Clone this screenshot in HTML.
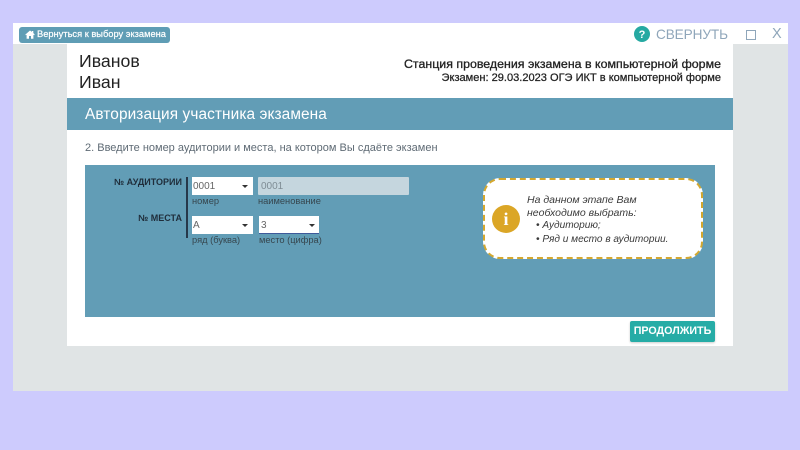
<!DOCTYPE html>
<html lang="ru">
<head>
<meta charset="utf-8">
<style>
html,body{margin:0;padding:0}
body{width:800px;height:450px;background:#cdcbfd;position:relative;overflow:hidden;font-family:"Liberation Sans",sans-serif;filter:blur(.35px)}
div,span,svg{position:absolute;white-space:nowrap}
.t{line-height:1}
.sel{background:#fff;height:18px;top:177px}
.sel span{left:1px;top:4px;font-size:10px;line-height:12px;color:#666}
.sel i{position:absolute;top:8px;width:0;height:0;border-left:3px solid transparent;border-right:3px solid transparent;border-top:3px solid #333}
.lab{font-size:9.3px;color:#37474f;line-height:10px}
.inf{left:527px;font-size:10.5px;font-style:italic;color:#3a3a3a;line-height:12px}
</style>
</head>
<body>
<div style="left:12.5px;top:22.5px;width:775.5px;height:368.5px;background:#e0e4e5"></div>
<div style="left:12.5px;top:22.5px;width:775.5px;height:21.5px;background:#fff"></div>
<div style="left:67px;top:44px;width:666px;height:302px;background:#fff"></div>

<div style="left:19px;top:26.5px;width:151px;height:16px;background:#5f9db5;border-radius:3px"></div>
<svg style="left:25px;top:30px" width="10" height="9" viewBox="0 0 10 9"><path d="M5 0.5L0.3 4.6l.6.6L1.6 4.7V8.7H4V6h2v2.7h2.4V4.7l.7.5.6-.6L8.3 3V1H7v.9z" fill="#fff"/></svg>
<div class="t" style="left:37px;top:29px;font-size:9.3px;line-height:11px;color:#fff;font-weight:400;-webkit-text-stroke:.2px #fff">Вернуться к выбору экзамена</div>

<div style="left:634px;top:26px;width:16px;height:16px;border-radius:50%;background:#26a9a2"></div>
<div class="t" style="left:634px;top:28.5px;width:16px;text-align:center;font-size:11px;line-height:12px;font-weight:700;color:#fff">?</div>
<div class="t" style="left:656px;top:26px;font-size:13.6px;line-height:17px;color:#8fa6ba;letter-spacing:-.1px">СВЕРНУТЬ</div>
<div style="left:746px;top:30px;width:8px;height:8px;border:1px solid #8fa6ba"></div>
<div class="t" style="left:772px;top:26px;font-size:14.5px;line-height:17px;color:#8fa6ba">X</div>

<div class="t" style="left:79px;top:52px;font-size:17.7px;line-height:19px;color:#222">Иванов</div>
<div class="t" style="left:79px;top:72.5px;font-size:17.7px;line-height:19px;color:#222">Иван</div>
<div class="t" style="right:79px;top:57px;font-size:12.4px;line-height:15px;color:#222;-webkit-text-stroke:.3px #222">Станция проведения экзамена в компьютерной форме</div>
<div class="t" style="right:79px;top:72px;font-size:11.05px;line-height:13px;color:#222;-webkit-text-stroke:.25px #222">Экзамен: 29.03.2023 ОГЭ ИКТ в компьютерной форме</div>

<div style="left:67px;top:98px;width:666px;height:32px;background:#629db6"></div>
<div class="t" style="left:85px;top:106px;font-size:15.4px;line-height:18px;color:#fff;letter-spacing:.1px">Авторизация участника экзамена</div>
<div class="t" style="left:85px;top:140.5px;font-size:11px;line-height:14px;color:#5f6b75">2. Введите номер аудитории и места, на котором Вы сдаёте экзамен</div>

<div style="left:85px;top:165px;width:630px;height:152px;background:#629db6"></div>

<div class="t" style="right:618px;top:176px;font-size:9px;line-height:12px;font-weight:700;color:#1f2d3a">№ АУДИТОРИИ</div>
<div class="t" style="right:618px;top:212px;font-size:9px;line-height:12px;font-weight:700;color:#1f2d3a">№ МЕСТА</div>
<div style="left:186px;top:177px;width:2px;height:61px;background:#26384a"></div>

<div class="sel" style="left:192px;width:61px"><span>0001</span><i style="left:50px"></i></div>
<div style="left:258px;top:177px;width:151px;height:18px;background:#c5d6de;border-radius:1px"></div>
<div class="t" style="left:261px;top:181px;font-size:10px;line-height:12px;color:#7f8d95">0001</div>
<div class="lab" style="left:192px;top:196px">номер</div>
<div class="lab" style="left:258px;top:196px">наименование</div>

<div class="sel" style="left:192px;top:216px;width:61px"><span>А</span><i style="left:50px"></i></div>
<div class="sel" style="left:259px;top:216px;width:60px;height:17px;border-bottom:1px solid #3f5a9a"><span style="left:2px">3</span><i style="left:50px"></i></div>
<div class="lab" style="left:192px;top:235px">ряд (буква)</div>
<div class="lab" style="left:259px;top:235px">место (цифра)</div>

<div style="left:483px;top:178px;width:215.5px;height:77px;background:#fff;border:2.5px dashed #d4a82f;border-radius:17px"></div>
<div style="left:492px;top:205px;width:28px;height:28px;border-radius:50%;background:#dba626"></div>
<div class="t" style="left:492px;top:210px;width:28px;text-align:center;font-family:'Liberation Serif',serif;font-size:18px;line-height:18px;font-weight:700;color:#fff">i</div>
<div class="inf" style="top:194px">На данном этапе Вам</div>
<div class="inf" style="top:207px">необходимо выбрать:</div>
<div class="inf" style="top:220px;left:536px;font-size:10.1px">• Аудиторию;</div>
<div class="inf" style="top:234px;left:536px;font-size:10.1px">• Ряд и место в аудитории.</div>

<div style="left:630px;top:320.5px;width:85px;height:21.5px;background:#26aca6;border-radius:2px;box-shadow:0 1px 2px rgba(0,0,0,.2)"></div>
<div class="t" style="left:630px;top:325px;width:85px;text-align:center;font-size:10.7px;line-height:13px;font-weight:700;color:#fff">ПРОДОЛЖИТЬ</div>
</body>
</html>
